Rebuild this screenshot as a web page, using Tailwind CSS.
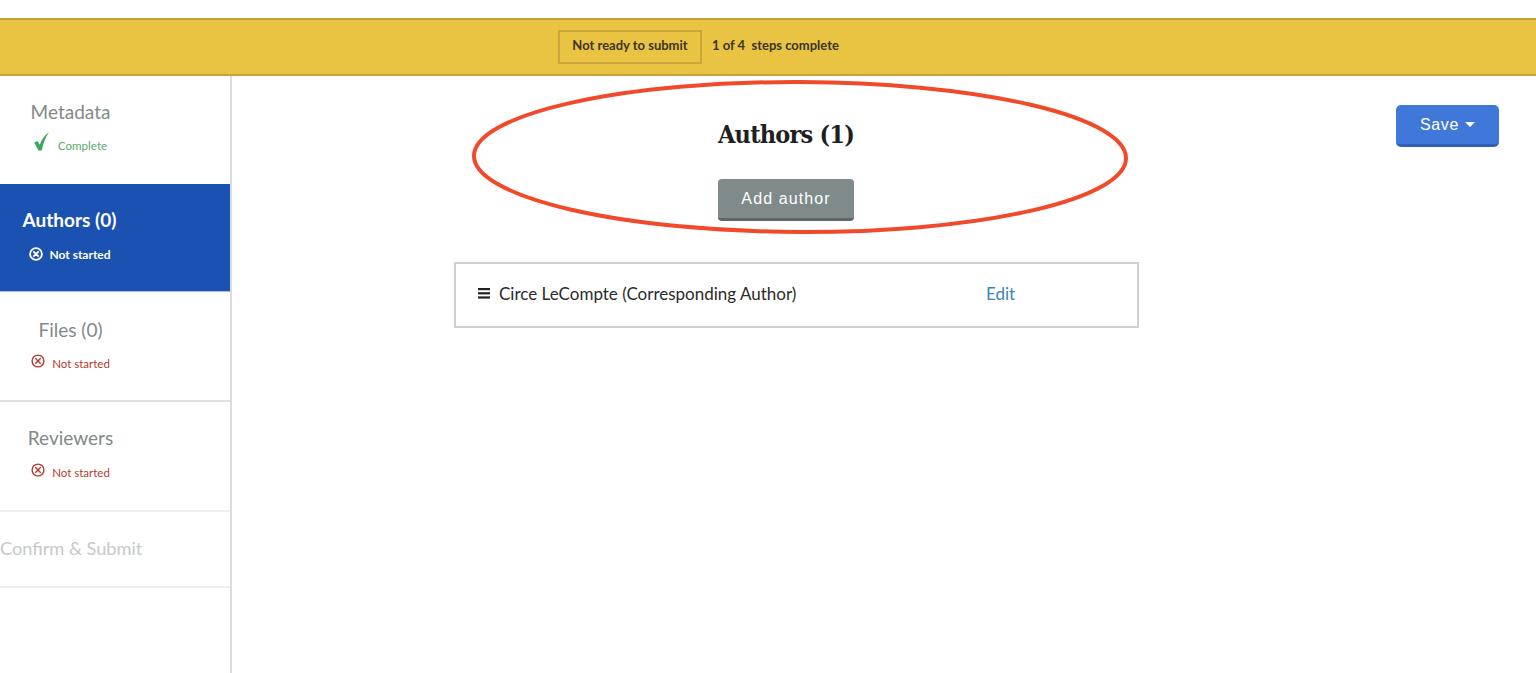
<!DOCTYPE html>
<html><head><meta charset="utf-8"><script src="https://cdn.jsdelivr.net/npm/@tailwindcss/browser@4"></script></head>
<body class="bg-white overflow-hidden font-['Lato','Liberation_Sans',sans-serif]">
<div class="relative h-[673px] w-[1536px] overflow-hidden">
  <div class="h-[18px]"></div>
  <header class="h-[58px] bg-[#e9c342] border-t-2 border-b-2 border-[#c9a236] flex items-center pl-[558px]">
    <div class="h-[34px] w-[144px] border-2 border-[#c9a53a] flex items-center justify-center pb-[3px] text-[13px] font-bold text-[#3a3525]">Not ready to submit</div>
    <div class="ml-[10px] pb-[3px] text-[13px] font-bold text-[#3a3525] whitespace-pre">1 of 4  steps complete</div>
  </header>
  <div class="flex h-[597px]">
    <aside class="w-[232px] shrink-0 border-r-2 border-[#dcdcdc]">
      <div class="h-[108px] pt-[24px]">
        <div class="w-[141px] text-center text-[19px] leading-[24px] text-[#82898a]">Metadata</div>
        <div class="w-[141px] flex justify-center items-start gap-[9px] mt-[8px]">
          <svg class="shrink-0" width="15" height="19" viewBox="0 0 15 19"><path d="M0.3 10.5 L3.4 9 L5.8 12.8 C7.2 8.5 10 3.8 14.9 0.3 C11.4 5.5 9 11.5 7.8 18.5 L4.4 18.5 Z" fill="#3fa45c"/></svg>
          <span class="text-[11.6px] text-[#58ab6e] mt-[5px]">Complete</span>
        </div>
      </div>
      <div class="h-[108px] bg-[#1b51b1] pt-[24px] border-b border-[#a9bce0]">
        <div class="w-[139px] text-center text-[19px] leading-[24px] font-bold text-white">Authors (0)</div>
        <div class="w-[140px] flex justify-center items-center gap-[6px] mt-[11px]">
          <svg class="shrink-0" width="14" height="14" viewBox="0 0 14 14" fill="none" stroke="#fff" stroke-width="1.8"><circle cx="7" cy="7" r="5.9"/><path d="M4.3 4.3 L9.7 9.7 M9.7 4.3 L4.3 9.7"/></svg>
          <span class="text-[12px] font-bold text-white mt-[3px]">Not started</span>
        </div>
      </div>
      <div class="h-[110px] pt-[26px] border-b-2 border-[#dfdfdf]">
        <div class="w-[141px] text-center text-[19px] leading-[24px] text-[#82898a]">Files (0)</div>
        <div class="w-[141px] flex justify-center items-center gap-[7px] mt-[8px]">
          <svg class="shrink-0" width="14" height="14" viewBox="0 0 14 14" fill="none" stroke="#b5392d" stroke-width="1.4"><circle cx="7" cy="7" r="5.9"/><path d="M4.3 4.3 L9.7 9.7 M9.7 4.3 L4.3 9.7"/></svg>
          <span class="text-[11.5px] text-[#b5392d] mt-[5px]">Not started</span>
        </div>
      </div>
      <div class="h-[110px] pt-[24px] border-b-2 border-[#eeeeee]">
        <div class="w-[141px] text-center text-[19px] leading-[24px] text-[#82898a]">Reviewers</div>
        <div class="w-[141px] flex justify-center items-center gap-[7px] mt-[9px]">
          <svg class="shrink-0" width="14" height="14" viewBox="0 0 14 14" fill="none" stroke="#b5392d" stroke-width="1.4"><circle cx="7" cy="7" r="5.9"/><path d="M4.3 4.3 L9.7 9.7 M9.7 4.3 L4.3 9.7"/></svg>
          <span class="text-[11.5px] text-[#b5392d] mt-[5px]">Not started</span>
        </div>
      </div>
      <div class="h-[76px] pt-[24px] border-b-2 border-[#eeeeee]">
        <div class="text-[18.2px] leading-[24px] text-[#c5c9c9] whitespace-nowrap">Confirm &amp; Submit</div>
      </div>
    </aside>
    <main class="flex-1 flex">
      <div class="w-[1108px] shrink-0 flex flex-col">
        <div class="flex flex-col items-center">
          <h1 class="mt-[41px] mb-[-1px] text-[25px] leading-[36px] font-bold text-[#1f1f1f] tracking-[-0.8px] font-['DejaVu_Serif_Condensed','DejaVu_Serif',serif]">Authors (1)</h1>
          <button class="mt-[27px] h-[42px] w-[136px] rounded-[4px] bg-[#7f8a8a] border-b-[3px] border-[#5f6868] text-white text-[16px] font-medium tracking-[1.1px] font-['Liberation_Sans',sans-serif]">Add author</button>
        </div>
        <div class="mt-[41px] ml-[222px] w-[685px] h-[66px] border-2 border-[#d0d0d0] flex items-center pl-[22px] pb-[3px]">
          <svg class="shrink-0" width="12" height="11" viewBox="0 0 12 11" fill="#222"><rect y="0" width="12" height="2.2"/><rect y="4.2" width="12" height="2.2"/><rect y="8.4" width="12" height="2.2"/></svg>
          <span class="ml-[9px] w-[487px] text-[17px] text-[#2b2b2b] whitespace-nowrap">Circe LeCompte (Corresponding Author)</span>
          <a class="text-[17px] text-[#3b86b5]">Edit</a>
        </div>
      </div>
      <div class="ml-auto mr-[37px] mt-[29px]">
        <button class="h-[42px] w-[103px] rounded-[5px] bg-[#3f78d8] border-b-[3px] border-[#2f60b4] text-white text-[16px] font-medium tracking-[0.6px] flex items-center justify-center gap-[6px] font-['Liberation_Sans',sans-serif]">Save
          <svg width="10" height="5" viewBox="0 0 10 5" fill="#fff"><path d="M0 0H10L5 5Z"/></svg>
        </button>
      </div>
    </main>
  </div>
  <svg class="absolute left-[470px] top-[78px]" width="662" height="160" viewBox="0 0 662 160" fill="none">
    <ellipse cx="330" cy="79" rx="326" ry="75" stroke="#f04a2b" stroke-width="4" transform="rotate(0.2 330 79)"/>
  </svg>
</div>
</body></html>
